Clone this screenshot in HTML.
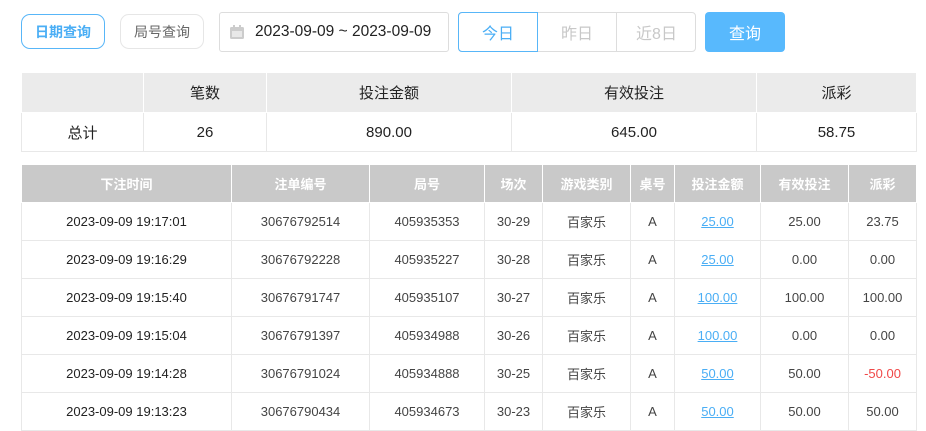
<!DOCTYPE html>
<html><head><meta charset="utf-8"><style>
*{margin:0;padding:0;box-sizing:border-box}
body{width:926px;height:424px;overflow:hidden;background:#fff;font-family:"Liberation Sans","Noto Sans CJK SC",sans-serif;position:relative;color:#333}
.a{position:absolute;display:flex;align-items:center;justify-content:center}
table{position:absolute;border-collapse:collapse;table-layout:fixed}
td{text-align:center;border:1px solid #e8e8e8;padding:0}
</style></head><body>
<div class="a" style="left:21px;top:14px;width:84px;height:35px;border:1px solid #58b6f8;border-radius:9px;color:#4aaef5;font-size:14px;font-weight:bold">日期查询</div>
<div class="a" style="left:120px;top:14px;width:84px;height:35px;border:1px solid #e6e6e6;border-radius:9px;color:#666;font-size:14px">局号查询</div>
<div class="a" style="left:219px;top:12px;width:230px;height:40px;border:1px solid #ddd;border-radius:3px;justify-content:flex-start;padding-left:9px;font-size:15.5px;color:#222">
<svg width="16" height="16" viewBox="0 0 16 16" style="margin-right:10px"><rect x="1" y="3" width="14" height="12" rx="1.5" fill="#ccc"/><rect x="4" y="1" width="2" height="4" fill="#ccc"/><rect x="10" y="1" width="2" height="4" fill="#ccc"/><rect x="3" y="7" width="10" height="6" fill="#e8e8e8"/></svg>2023-09-09 ~ 2023-09-09</div>
<div class="a" style="left:458px;top:12px;width:238px;height:40px;border:1px solid #ddd;border-radius:4px"></div>
<div class="a" style="left:458px;top:12px;width:80px;height:40px;border:1px solid #58b6f8;border-radius:4px 0 0 4px;color:#4aaef5;font-size:16px">今日</div>
<div class="a" style="left:538px;top:12px;width:79px;height:40px;border-right:1px solid #ddd;color:#c8c8c8;font-size:16px">昨日</div>
<div class="a" style="left:617px;top:12px;width:79px;height:40px;color:#c8c8c8;font-size:16px">近8日</div>
<div class="a" style="left:705px;top:12px;width:80px;height:40px;background:#58b9fd;border-radius:4px;color:#fff;font-size:16px">查询</div>

<table style="left:21px;top:72px;width:895px;font-size:15px;color:#222">
<colgroup><col style="width:122px"><col style="width:123px"><col style="width:245px"><col style="width:245px"><col style="width:160px"></colgroup>
<tr style="height:40px;background:#ebebeb"><td style="border-color:#fff">&nbsp;</td><td style="border-color:#fff">笔数</td><td style="border-color:#fff">投注金额</td><td style="border-color:#fff">有效投注</td><td style="border-color:#fff">派彩</td></tr>
<tr style="height:39px"><td>总计</td><td>26</td><td>890.00</td><td>645.00</td><td>58.75</td></tr>
</table>

<table style="left:21px;top:164px;width:895px;font-size:13px;color:#444">
<colgroup><col style="width:210px"><col style="width:138px"><col style="width:115px"><col style="width:58px"><col style="width:88px"><col style="width:44px"><col style="width:86px"><col style="width:88px"><col style="width:68px"></colgroup>
<tr style="height:38px;background:#c9c9c9;color:#fff;font-weight:bold"><td style="border-color:#fff">下注时间</td><td style="border-color:#fff">注单编号</td><td style="border-color:#fff">局号</td><td style="border-color:#fff">场次</td><td style="border-color:#fff">游戏类别</td><td style="border-color:#fff">桌号</td><td style="border-color:#fff">投注金额</td><td style="border-color:#fff">有效投注</td><td style="border-color:#fff">派彩</td></tr>
<tr style="height:38px"><td style="color:#222">2023-09-09 19:17:01</td><td>30676792514</td><td>405935353</td><td>30-29</td><td>百家乐</td><td>A</td><td><u style="color:#4aaef5">25.00</u></td><td>25.00</td><td>23.75</td></tr>
<tr style="height:38px"><td style="color:#222">2023-09-09 19:16:29</td><td>30676792228</td><td>405935227</td><td>30-28</td><td>百家乐</td><td>A</td><td><u style="color:#4aaef5">25.00</u></td><td>0.00</td><td>0.00</td></tr>
<tr style="height:38px"><td style="color:#222">2023-09-09 19:15:40</td><td>30676791747</td><td>405935107</td><td>30-27</td><td>百家乐</td><td>A</td><td><u style="color:#4aaef5">100.00</u></td><td>100.00</td><td>100.00</td></tr>
<tr style="height:38px"><td style="color:#222">2023-09-09 19:15:04</td><td>30676791397</td><td>405934988</td><td>30-26</td><td>百家乐</td><td>A</td><td><u style="color:#4aaef5">100.00</u></td><td>0.00</td><td>0.00</td></tr>
<tr style="height:38px"><td style="color:#222">2023-09-09 19:14:28</td><td>30676791024</td><td>405934888</td><td>30-25</td><td>百家乐</td><td>A</td><td><u style="color:#4aaef5">50.00</u></td><td>50.00</td><td style="color:#f04848">-50.00</td></tr>
<tr style="height:38px"><td style="color:#222">2023-09-09 19:13:23</td><td>30676790434</td><td>405934673</td><td>30-23</td><td>百家乐</td><td>A</td><td><u style="color:#4aaef5">50.00</u></td><td>50.00</td><td>50.00</td></tr>
</table>
</body></html>
